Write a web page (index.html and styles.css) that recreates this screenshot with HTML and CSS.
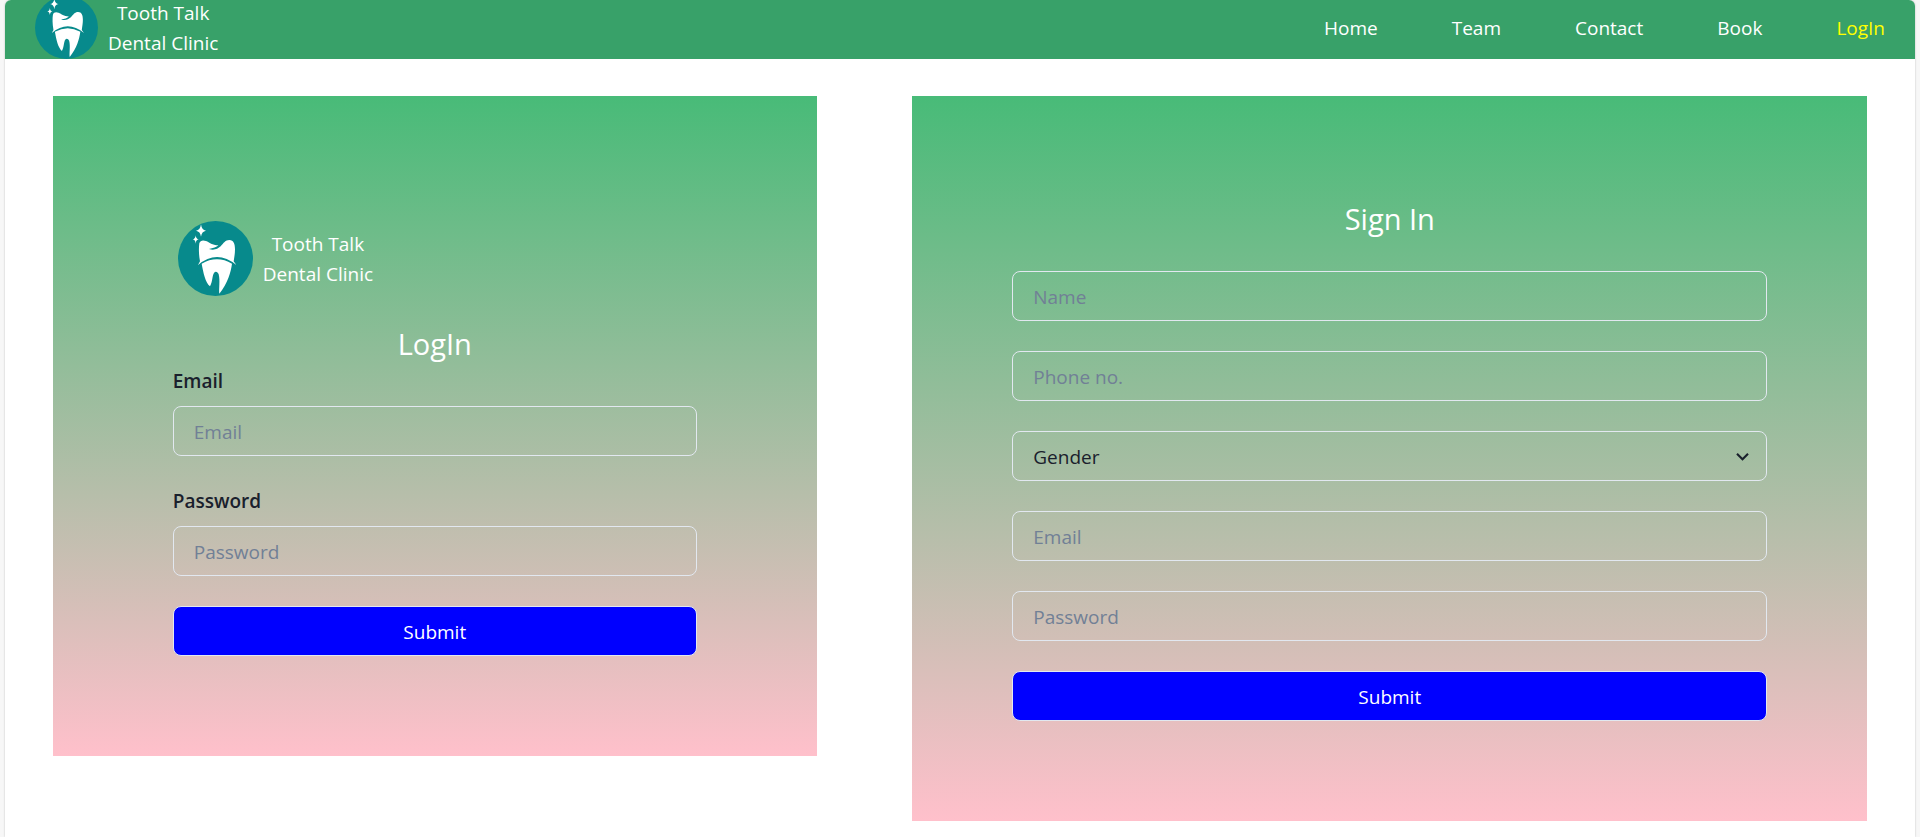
FILE: index.html
```html
<!DOCTYPE html>
<html lang="en">
<head>
<meta charset="utf-8">
<title>Tooth Talk Dental Clinic</title>
<link rel="stylesheet" href="styles.css">
</head>
<body>
<svg width="0" height="0" class="sprite" aria-hidden="true">
  <symbol id="tooth" viewBox="0 0 225 225">
    <circle cx="112.5" cy="112.5" r="112.5" fill="#078a8c"/>
    <g fill="#fff">
      <path d="M69 10Q71 27 84 29Q71 31 69 47Q67 31 54 29Q67 27 69 10Z"/>
      <path d="M53 43Q54 54 62 55Q54 56 53 68Q52 56 44 55Q52 54 53 43Z"/>
      <path d="M66 121C62 100 62 80 64 67C67 57 76 57 84 60C95 64 102 73 121 73C116 79 105 82 93 84C108 89 119 84 128 76C137 66 142 57 154 57C167 57 171 69 171 84C171 98 169 108 167 121L175 132Q117 84 60 132Z"/>
      <path d="M71 128Q117 102 162 128C158 155 150 185 124 218C122 205 127 178 122 160C119 152 112 150 108 156C102 166 104 182 96 196C82 185 76 155 71 128Z"/>
    </g>
  </symbol>
</svg>
<div class="page">
  <header class="navbar">
    <a class="brand" href="#">
      <svg class="brand-logo brand-logo-small" role="img" aria-label="Tooth logo"><use href="#tooth"/></svg>
      <span class="brand-name">Tooth Talk<br>Dental Clinic</span>
    </a>
    <nav class="links">
      <a href="#">Home</a>
      <a href="#">Team</a>
      <a href="#">Contact</a>
      <a href="#">Book</a>
      <a class="active" href="#">LogIn</a>
    </nav>
  </header>
  <main class="panels">
    <form class="panel panel-login">
      <div class="brand brand-login">
        <svg class="brand-logo" role="img" aria-label="Tooth logo"><use href="#tooth"/></svg>
        <span class="brand-name">Tooth Talk<br>Dental Clinic</span>
      </div>
      <h2 class="title">LogIn</h2>
      <div class="stack">
        <div class="field">
          <label for="login-email">Email</label>
          <input class="control" id="login-email" type="email" placeholder="Email">
        </div>
        <div class="field">
          <label for="login-password">Password</label>
          <input class="control" id="login-password" type="password" placeholder="Password">
        </div>
        <button class="control submit" type="submit">Submit</button>
      </div>
    </form>
    <form class="panel panel-signin">
      <div class="stack">
        <h2 class="title">Sign In</h2>
        <input class="control" type="text" placeholder="Name" aria-label="Name">
        <input class="control" type="tel" placeholder="Phone no." aria-label="Phone no.">
        <div class="select">
          <select class="control" aria-label="Gender">
            <option>Gender</option>
            <option>Male</option>
            <option>Female</option>
          </select>
          <svg class="chevron" viewBox="0 0 24 24" aria-hidden="true"><path fill="currentColor" d="M16.59 8.59L12 13.17 7.41 8.59 6 10l6 6 6-6z"/></svg>
        </div>
        <input class="control" type="email" placeholder="Email" aria-label="Email">
        <input class="control" type="password" placeholder="Password" aria-label="Password">
        <button class="control submit" type="submit">Submit</button>
      </div>
    </form>
  </main>
</div>
</body>
</html>
```
FILE: styles.css
```css
* {
  box-sizing: border-box;
}

body {
  margin: 0;
  background: #f7f7f7;
  color: #1a202c;
  font-family: "Segoe UI", "Open Sans", "Noto Sans", sans-serif;
  font-size: 19px;
  line-height: 30px;
}

.sprite {
  position: absolute;
}

.page {
  min-height: 100vh;
  margin: 0 5px;
  border-radius: 6px 6px 0 0;
  background: #fff;
  box-shadow: 0 0 2px rgba(0, 0, 0, 0.25);
}

.navbar {
  display: flex;
  align-items: flex-end;
  justify-content: space-between;
  height: 59px;
  padding: 0 30px;
  border-radius: 6px 6px 0 0;
  background: #38a169;
}

.brand {
  display: flex;
  align-items: center;
  gap: 10px;
  color: #fff;
  text-align: center;
  text-decoration: none;
}

.brand-logo {
  width: 75px;
  height: 75px;
}

.brand-logo-small {
  width: 63px;
  height: 63px;
}

.brand-login {
  padding: 25px 5px;
}

.links {
  display: flex;
  align-self: center;
  gap: 74px;
  padding-bottom: 4px;
}

.links a {
  color: #fff;
  text-decoration: none;
}

.links .active {
  color: #ff0;
}

.panels {
  display: flex;
  align-items: flex-start;
  justify-content: space-around;
  padding: 37px 0 16px;
}

.panel {
  background: linear-gradient(#48bb78, #ffc0cb);
}

.panel-login {
  width: 40%;
  padding: 100px 120px;
}

.panel-signin {
  width: 50%;
  padding: 100px;
}

.title {
  margin: 0;
  color: #fff;
  font-size: 29px;
  font-weight: 400;
  line-height: 45px;
  text-align: center;
}

.stack {
  display: flex;
  flex-direction: column;
  gap: 30px;
}

.field {
  display: flex;
  flex-direction: column;
  gap: 10px;
}

.field label {
  font-weight: 600;
}

.control {
  width: 100%;
  height: 50px;
  padding: 2px 20px 0;
  border: 1px solid #e2e8f0;
  border-radius: 8px;
  background: transparent;
  color: inherit;
  font: inherit;
}

.control::placeholder {
  color: #718096;
  opacity: 1;
}

.select {
  position: relative;
}

.select .control {
  display: block;
  appearance: none;
}

.chevron {
  position: absolute;
  top: 0;
  right: 12px;
  bottom: 0;
  width: 25px;
  height: 25px;
  margin: auto 0;
  pointer-events: none;
}

.submit {
  background: #00f;
  color: #fff;
  cursor: pointer;
}
```
